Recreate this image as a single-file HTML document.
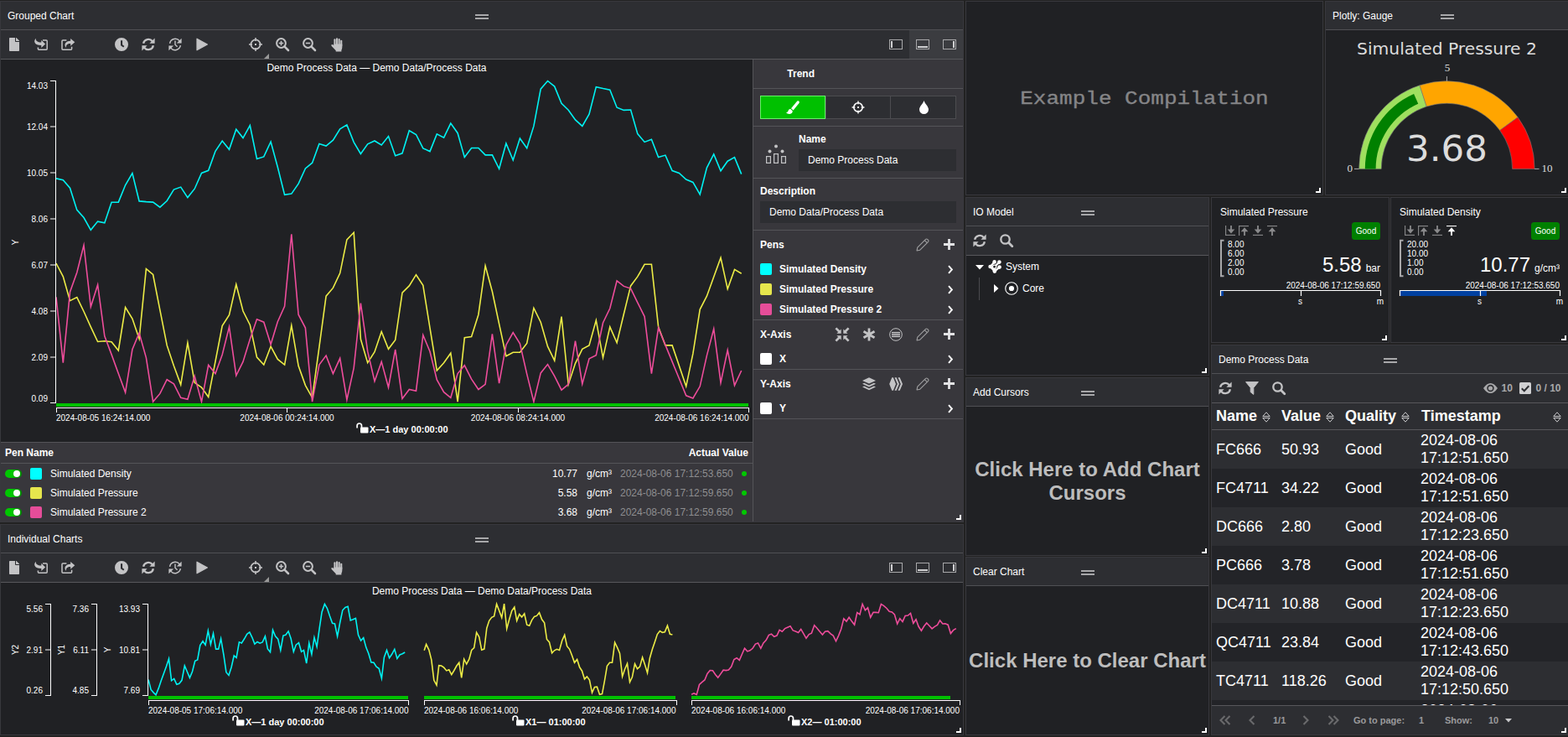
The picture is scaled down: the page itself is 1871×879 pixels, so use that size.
<!DOCTYPE html><html><head><meta charset="utf-8"><title>Dashboard</title><style>
*{box-sizing:border-box}
html,body{margin:0;padding:0}
body{width:1871px;height:879px;overflow:hidden;background:#222222;font-family:"Liberation Sans",sans-serif;font-size:12px;color:#fff;position:relative}
.p{position:absolute;border:1px solid #38383d;background:#202124;overflow:hidden}
.a{position:absolute}
.hd{position:absolute;left:0;top:0;right:0;height:34px;background:#2d2e32;border-bottom:1px solid #505054}
.hd .t{position:absolute;left:8px;top:1px;line-height:33px;font-size:12px;color:#fff;white-space:nowrap}
.hd .g{position:absolute;top:15px;width:16px;height:6px;border-top:2px solid #a8a8aa;border-bottom:2px solid #a8a8aa}
.tb{position:absolute;left:0;right:0;height:35px;background:#2d2e32;border-bottom:1px solid #57575b}
.rz{position:absolute;right:2px;bottom:2px;width:6px;height:6px;border-right:2px solid #fff;border-bottom:2px solid #fff}
.t{white-space:nowrap}
.b{font-weight:bold}
svg{position:absolute;overflow:visible}
.sp{position:absolute;background:#38373c}
.ln{position:absolute;height:1px;background:#545458}
.big{position:absolute;left:0;right:0;text-align:center;font-weight:bold;font-size:24px;line-height:27.5px;color:#bdbdbd}
</style></head><body><div class="p" style="left:0px;top:1px;width:1150px;height:622px">
<div class="hd"><div class="t">Grouped Chart</div><div class="g" style="left:566px"></div></div>
<div class="tb" style="top:34px">
<div class="a" style="left:1084px;top:0;width:65px;height:34px;background:#3b3c40"></div>
<svg style="left:10.00px;top:9.00px" width="12" height="16" viewBox="0 0 384 512"><path fill="#c3c3c5" d="M224 136V0H24C10.7 0 0 10.7 0 24v464c0 13.3 10.7 24 24 24h336c13.300 0 24-10.700 24-24V160H248c-13.200 0-24-10.800-24-24zm160-14.100v6.100H256V0h6.100c6.400 0 12.500 2.500 17 7l97.900 98c4.500 4.500 7 10.600 7 16.900z"/></svg>
<svg style="left:40.00px;top:9.40px" width="16" height="16" viewBox="0 0 16 16"><path d="M10 3.100H14.200Q15.200 3.100 15.200 4.100V13.200Q15.200 14.200 14.200 14.200H5.400Q4.400 14.200 4.400 13.200V11.500" fill="none" stroke="#c3c3c5" stroke-width="1.500"/><path d="M1.700 0.800C-1.800 4.800 0.800 9.200 8.300 9V12.100L13.100 7.400L8.300 2.700V5.500C4.300 5.600 1.600 4.300 1.700 0.800Z" fill="#c3c3c5"/></svg>
<svg style="left:72.00px;top:9.40px" width="17" height="16" viewBox="0 0 17 16"><path d="M6.400 3.100H2Q1 3.100 1 4.100V13.200Q1 14.200 2 14.200H11.600Q12.600 14.200 12.600 13.200V10.800" fill="none" stroke="#c3c3c5" stroke-width="1.500"/><path d="M11.200 0.900L16.300 5.300L11.200 9.700V6.900C7.600 6.800 5.600 8.200 5.900 11.900C2.800 8.100 5 3.800 11.200 3.700Z" fill="#c3c3c5"/></svg>
<svg style="left:136.00px;top:9.00px" width="16" height="16" viewBox="0 0 16 16"><path fill-rule="evenodd" fill="#c3c3c5" d="M8 0A8 8 0 1 0 8 16A8 8 0 1 0 8 0ZM7 3.200H9.100V8.200L11.400 9.900L10.200 11.600L7 9.200Z"/></svg>
<svg style="left:168.00px;top:9.00px" width="16" height="16" viewBox="0 0 16 16"><g fill="none" stroke="#c3c3c5" stroke-width="2.300"><path d="M2.100 6.800A6.100 6.100 0 0 1 12.900 4.200"/><path d="M13.900 9.200A6.100 6.100 0 0 1 3.100 11.800"/></g><path fill="#c3c3c5" d="M15.600 0.600V6.800H9.400Z"/><path fill="#c3c3c5" d="M0.400 15.400V9.200H6.600Z"/></svg>
<svg style="left:200.00px;top:9.00px" width="16" height="16" viewBox="0 0 16 16"><g fill="none" stroke="#c3c3c5" stroke-width="1.500"><path d="M1.600 6.800A6.600 6.600 0 0 1 13.300 3.900"/><path d="M14.400 9.200A6.600 6.600 0 0 1 2.700 12.100"/><path d="M8 3.600V8.200L10.600 10.800" stroke-width="1.400"/></g><path fill="#c3c3c5" d="M15.600 0.800V6.600H9.800Z"/><path fill="#c3c3c5" d="M0.400 15.200V9.400H6.200Z"/></svg>
<svg style="left:232.50px;top:9.00px" width="14" height="16" viewBox="0 0 14 16"><path fill="#c3c3c5" stroke="#c3c3c5" stroke-width="1.200" stroke-linejoin="round" d="M1 1.200L13.400 8L1 14.800Z"/></svg>
<svg style="left:296.00px;top:9.00px" width="16" height="16" viewBox="0 0 16 16"><g fill="none" stroke="#c3c3c5"><circle cx="8" cy="8" r="5.6" stroke-width="1.70"/><path d="M8 0.00V4.00M8 12.00V16.00M0.00 8H4.00M12.00 8H16.00" stroke-width="1.50"/></g><rect x="7.00" y="7.00" width="2.00" height="2.00" fill="#c3c3c5"/></svg>
<svg style="left:328.00px;top:9.00px" width="16" height="16" viewBox="0 0 16 16"><g fill="none" stroke="#c3c3c5"><circle cx="6.500" cy="6.500" r="5.400" stroke-width="2"/><path d="M10.600 10.600L15 15" stroke-width="2.600" stroke-linecap="round"/><path d="M3.800 6.500H9.200 M6.500 3.800V9.200" stroke-width="1.600"/></g></svg>
<svg style="left:360.00px;top:9.00px" width="16" height="16" viewBox="0 0 16 16"><g fill="none" stroke="#c3c3c5"><circle cx="6.500" cy="6.500" r="5.400" stroke-width="2"/><path d="M10.600 10.600L15 15" stroke-width="2.600" stroke-linecap="round"/><path d="M3.800 6.500H9.200" stroke-width="1.600"/></g></svg>
<svg style="left:393.70px;top:8.70px" width="14" height="17" viewBox="0 0 14 17"><g fill="#c3c3c5"><rect x="3.400" y="1.300" width="2.100" height="9" rx="1.050"/><rect x="6" y="0.200" width="2.100" height="10" rx="1.050"/><rect x="8.600" y="0.900" width="2.100" height="9.500" rx="1.050"/><rect x="11.200" y="2.700" width="2.100" height="8" rx="1.050"/><path d="M3.400 7.500H13.300V11.500Q13.300 13.500 12.400 14.800V16.400H5.700V15.200L0.700 10Q-0.100 8.900 0.700 8.200Q1.600 7.600 2.500 8.400L3.400 9.400Z"/></g></svg>
<svg style="left:314px;top:28px" width="6" height="6"><path d="M6 0V6H0Z" fill="#999"/></svg>
<div class="a" style="left:1060px;top:11px;width:16px;height:12px;border:1px solid #a8a8aa"></div>
<div class="a" style="left:1062px;top:13px;width:2px;height:8px;background:#d0d0d2"></div>
<div class="a" style="left:1092px;top:11px;width:16px;height:12px;border:1px solid #a8a8aa"></div>
<div class="a" style="left:1094px;top:19px;width:12px;height:2px;background:#d0d0d2"></div>
<div class="a" style="left:1124px;top:11px;width:16px;height:12px;border:1px solid #a8a8aa"></div>
<div class="a" style="left:1136px;top:13px;width:2px;height:8px;background:#d0d0d2"></div>
</div>
<svg style="left:-1px;top:-2px" width="1150" height="623" viewBox="0 0 1150 623" font-family="Liberation Sans,sans-serif">
<g fill="none" stroke-width="1.6" stroke-linejoin="miter" stroke-miterlimit="6">
<polyline stroke="#00f2f2" points="67.0,212.9 75.3,214.7 83.5,224.2 91.8,250.4 100.0,259.5 108.3,274.3 116.6,264.1 124.8,265.9 133.1,241.3 141.3,241.1 149.6,220.8 157.9,206.5 166.1,239.9 174.4,240.6 182.6,241.1 190.9,247.2 199.2,239.5 207.4,226.1 215.7,223.1 223.9,235.6 232.2,225.2 240.5,206.5 248.7,203.3 257.0,180.3 265.2,168.0 273.5,178.3 281.8,154.2 290.0,164.6 298.3,149.6 306.5,189.4 314.8,186.9 323.1,169.0 331.3,199.2 339.6,232.4 347.8,231.1 356.1,219.2 364.4,201.0 372.6,194.2 380.9,171.5 389.1,174.0 397.4,167.1 405.7,153.9 413.9,148.9 422.2,169.6 430.4,183.5 438.7,171.9 447.0,168.0 455.2,173.0 463.5,162.6 471.7,185.8 480.0,182.8 488.3,155.8 496.5,160.5 504.8,176.9 513.0,180.6 521.3,159.9 529.6,164.2 537.8,147.1 546.1,158.7 554.3,187.6 562.6,176.5 570.9,176.5 579.1,184.9 587.4,184.9 595.6,201.3 603.9,171.0 612.2,191.0 620.4,165.1 628.7,176.7 636.9,150.4 645.2,106.2 653.5,96.5 661.7,103.1 670.0,123.3 678.2,131.2 686.5,142.9 694.8,150.4 703.0,136.1 711.3,103.6 719.5,105.5 727.8,107.1 736.1,128.2 744.3,131.4 752.6,131.0 760.8,159.6 769.1,169.4 777.4,166.2 785.6,187.6 793.9,185.1 802.1,203.5 810.4,206.5 818.7,214.0 826.9,217.4 835.2,232.0 843.4,200.1 851.7,184.0 860.0,203.8 868.2,192.2 876.5,187.6 884.7,207.6"/>
<polyline stroke="#ecec46" points="67.0,314.0 75.3,329.9 83.5,358.6 91.8,354.6 100.0,371.5 108.3,389.9 116.6,407.5 124.8,406.7 133.1,407.7 141.3,418.0 149.6,366.6 157.9,380.1 166.1,404.1 174.4,320.6 182.6,327.5 190.9,369.8 199.2,411.9 207.4,436.3 215.7,458.8 223.9,408.9 232.2,456.4 240.5,462.0 248.7,473.5 257.0,431.0 265.2,388.6 273.5,375.7 281.8,339.2 290.0,371.0 298.3,387.4 306.5,426.1 314.8,435.1 323.1,413.1 331.3,428.5 339.6,435.1 347.8,388.2 356.1,436.3 364.4,459.6 372.6,474.3 380.9,413.8 389.1,353.2 397.4,343.4 405.7,325.8 413.9,285.9 422.2,277.3 430.4,404.5 438.7,432.7 447.0,419.7 455.2,395.5 463.5,416.3 471.7,405.4 480.0,349.2 488.3,340.9 496.5,327.7 504.8,340.4 513.0,391.1 521.3,442.0 529.6,432.7 537.8,421.2 546.1,479.1 554.3,402.8 562.6,401.6 570.9,375.2 579.1,317.0 587.4,347.8 595.6,386.4 603.9,424.8 612.2,420.2 620.4,420.2 628.7,409.4 636.9,367.4 645.2,384.2 653.5,413.1 661.7,430.2 670.0,377.6 678.2,458.4 686.5,433.3 694.8,416.3 703.0,411.9 711.3,382.0 719.5,426.6 727.8,389.9 736.1,408.7 744.3,374.7 752.6,340.9 760.8,329.9 769.1,315.3 777.4,315.3 785.6,389.9 793.9,411.9 802.1,411.9 810.4,436.3 818.7,460.8 826.9,421.7 835.2,369.1 843.4,353.2 851.7,330.2 860.0,307.4 868.2,344.6 876.5,321.4 884.7,326.3"/>
<polyline stroke="#ee4d9b" points="67.0,354.4 75.3,432.7 83.5,348.3 91.8,325.0 100.0,292.5 108.3,365.9 116.6,339.7 124.8,400.9 133.1,422.9 141.3,445.4 149.6,468.1 157.9,416.8 166.1,397.2 174.4,426.6 182.6,479.1 190.9,469.4 199.2,452.7 207.4,457.9 215.7,474.3 223.9,476.2 232.2,448.6 240.5,479.1 248.7,435.4 257.0,445.6 265.2,422.9 273.5,389.9 281.8,447.8 290.0,431.4 298.3,404.5 306.5,380.8 314.8,384.2 323.1,410.7 331.3,383.7 339.6,365.4 347.8,279.3 356.1,375.2 364.4,391.1 372.6,479.1 380.9,435.1 389.1,424.1 397.4,445.6 405.7,427.3 413.9,476.7 422.2,438.8 430.4,361.7 438.7,419.2 447.0,454.7 455.2,431.4 463.5,462.0 471.7,416.8 480.0,475.5 488.3,464.5 496.5,466.2 504.8,399.6 513.0,419.2 521.3,453.0 529.6,467.6 537.8,474.3 546.1,445.6 554.3,435.8 562.6,452.2 570.9,464.5 579.1,458.4 587.4,398.4 595.6,457.1 603.9,411.4 612.2,396.5 620.4,409.9 628.7,446.1 636.9,479.1 645.2,444.9 653.5,434.6 661.7,448.6 670.0,465.2 678.2,458.4 686.5,406.7 694.8,457.9 703.0,427.8 711.3,423.6 719.5,385.0 727.8,367.8 736.1,334.8 744.3,341.4 752.6,344.1 760.8,360.8 769.1,377.6 777.4,445.6 785.6,391.1 793.9,411.4 802.1,431.4 810.4,451.5 818.7,471.8 826.9,475.0 835.2,460.8 843.4,424.1 851.7,392.3 860.0,456.4 868.2,417.5 876.5,459.6 884.7,442.0"/>
</g>
<g stroke="#fff" stroke-width="1" fill="none" shape-rendering="crispEdges">
<path d="M60 96.5H66.5V480.5H60"/>
<path d="M60 151H66" stroke="#8e8e90" stroke-width="2"/>
<path d="M60 206H66" stroke="#8e8e90" stroke-width="2"/>
<path d="M60 261H66" stroke="#8e8e90" stroke-width="2"/>
<path d="M60 316H66" stroke="#8e8e90" stroke-width="2"/>
<path d="M60 371H66" stroke="#8e8e90" stroke-width="2"/>
<path d="M60 426H66" stroke="#8e8e90" stroke-width="2"/>
<path d="M67.5 492V486.5H893.5V492"/>
<path d="M342.5 486V492M618.5 486V492"/>
</g>
<rect x="67" y="481" width="826" height="4" fill="#00c000"/>
<g fill="#fff" font-size="10" text-anchor="end">
<text x="57" y="105.5">14.03</text>
<text x="57" y="154.5">12.04</text>
<text x="57" y="209.5">10.05</text>
<text x="57" y="264.5">8.06</text>
<text x="57" y="319.5">6.07</text>
<text x="57" y="374.5">4.08</text>
<text x="57" y="429.5">2.09</text>
<text x="57" y="478.5">0.09</text>
</g>
<text x="0" y="0" transform="translate(21.5,289) rotate(-90)" fill="#fff" font-size="10" text-anchor="middle">Y</text>
<g fill="#fff" font-size="10">
<text x="67" y="502">2024-08-05 16:24:14.000</text>
<text x="342.5" y="502" text-anchor="middle">2024-08-06 00:24:14.000</text>
<text x="618" y="502" text-anchor="middle">2024-08-06 08:24:14.000</text>
<text x="893.5" y="502" text-anchor="end">2024-08-06 16:24:14.000</text>
</g>
<text x="441" y="516" fill="#fff" font-size="11" font-weight="bold">X—1 day 00:00:00</text>
<g transform="translate(425,504)"><rect x="5" y="5.600" width="9.500" height="6.900" rx="1" fill="#fff"/><path d="M1.100 6.600V3.700A2.700 2.700 0 0 1 6.500 3.700V6" fill="none" stroke="#fff" stroke-width="1.700"/></g>
<text x="449.5" y="84.5" fill="#fff" font-size="12" text-anchor="middle">Demo Process Data — Demo Data/Process Data</text>
</svg>
<div class="sp" style="left:0;top:525px;width:897px;height:96px"></div>
<div class="ln" style="left:0;top:525px;width:897px"></div>
<div class="ln" style="left:0;top:550px;width:897px"></div>
<div class="a t" style="top:529.5px;line-height:16px;font-size:12px;color:#fff;font-weight:bold;left:5px;">Pen Name</div>
<div class="a t" style="top:529.5px;line-height:16px;font-size:12px;color:#fff;font-weight:bold;right:calc(100% - 892px);">Actual Value</div>
<div class="a" style="left:5px;top:558px;width:20px;height:10px;border-radius:5px;background:linear-gradient(90deg,#00c800 40%,#008a00)"></div>
<div class="a" style="left:15px;top:559px;width:8px;height:8px;border-radius:4px;background:#fff"></div>
<div class="a" style="left:35px;top:556px;width:14px;height:14px;border-radius:2px;background:#00ffff"></div>
<div class="a t" style="top:555.0px;line-height:16px;font-size:12px;color:#fff;left:59px;">Simulated Density</div>
<div class="a t" style="top:555.0px;line-height:16px;font-size:12px;color:#fff;right:calc(100% - 688px);">10.77</div>
<div class="a t" style="top:555.0px;line-height:16px;font-size:12px;color:#fff;left:699px;">g/cm³</div>
<div class="a t" style="top:555.0px;line-height:16px;font-size:12px;color:#8e8e90;left:739px;">2024-08-06 17:12:53.650</div>
<div class="a" style="left:884px;top:560px;width:6px;height:6px;border-radius:3px;background:#00c800"></div>
<div class="a" style="left:5px;top:581px;width:20px;height:10px;border-radius:5px;background:linear-gradient(90deg,#00c800 40%,#008a00)"></div>
<div class="a" style="left:15px;top:582px;width:8px;height:8px;border-radius:4px;background:#fff"></div>
<div class="a" style="left:35px;top:579px;width:14px;height:14px;border-radius:2px;background:#e6e64d"></div>
<div class="a t" style="top:578.0px;line-height:16px;font-size:12px;color:#fff;left:59px;">Simulated Pressure</div>
<div class="a t" style="top:578.0px;line-height:16px;font-size:12px;color:#fff;right:calc(100% - 688px);">5.58</div>
<div class="a t" style="top:578.0px;line-height:16px;font-size:12px;color:#fff;left:699px;">g/cm³</div>
<div class="a t" style="top:578.0px;line-height:16px;font-size:12px;color:#8e8e90;left:739px;">2024-08-06 17:12:59.650</div>
<div class="a" style="left:884px;top:583px;width:6px;height:6px;border-radius:3px;background:#00c800"></div>
<div class="a" style="left:5px;top:604px;width:20px;height:10px;border-radius:5px;background:linear-gradient(90deg,#00c800 40%,#008a00)"></div>
<div class="a" style="left:15px;top:605px;width:8px;height:8px;border-radius:4px;background:#fff"></div>
<div class="a" style="left:35px;top:602px;width:14px;height:14px;border-radius:2px;background:#e64d99"></div>
<div class="a t" style="top:601.0px;line-height:16px;font-size:12px;color:#fff;left:59px;">Simulated Pressure 2</div>
<div class="a t" style="top:601.0px;line-height:16px;font-size:12px;color:#fff;right:calc(100% - 688px);">3.68</div>
<div class="a t" style="top:601.0px;line-height:16px;font-size:12px;color:#fff;left:699px;">g/cm³</div>
<div class="a t" style="top:601.0px;line-height:16px;font-size:12px;color:#8e8e90;left:739px;">2024-08-06 17:12:59.650</div>
<div class="a" style="left:884px;top:606px;width:6px;height:6px;border-radius:3px;background:#00c800"></div>
<div class="sp" style="left:897px;top:69px;width:252px;height:552px;border-left:1px solid #545458"></div>
<div class="ln" style="left:898px;top:103px;width:251px"></div>
<div class="ln" style="left:898px;top:148px;width:251px"></div>
<div class="ln" style="left:898px;top:210px;width:251px"></div>
<div class="ln" style="left:898px;top:272px;width:251px"></div>
<div class="ln" style="left:898px;top:379px;width:251px"></div>
<div class="ln" style="left:898px;top:438px;width:251px"></div>
<div class="ln" style="left:898px;top:497px;width:251px"></div>
<div class="a t" style="top:78.0px;line-height:16px;font-size:12px;color:#fff;font-weight:bold;left:938.3px;">Trend</div>
<div class="a" style="left:906px;top:112px;width:78px;height:28px;background:#00c000;border:1px solid #66f266"></div>
<div class="a" style="left:984px;top:112px;width:78px;height:28px;background:#2d2e32;border:1px solid #4c4c50"></div>
<div class="a" style="left:1062px;top:112px;width:78px;height:28px;background:#2d2e32;border:1px solid #4c4c50;border-left:none"></div>
<svg style="left:937.00px;top:118.00px" width="16" height="16" viewBox="0 0 16 16"><path fill="#fff" d="M13.300 0.500Q14.800 -0.300 15.600 0.900Q16.200 2 15.300 3.200L8.600 11.400L6 9.200Z"/><path fill="#fff" d="M5.200 10.100L7.700 12.300Q8 15.600 4.300 16Q1.500 16.200 0 14.200Q2.400 13.900 2.600 12Q3 10 5.200 10.100Z"/></svg>
<svg style="left:1015.00px;top:118.00px" width="16" height="16" viewBox="0 0 16 16"><g fill="none" stroke="#fff"><circle cx="8" cy="8" r="5.2" stroke-width="1.58"/><path d="M8 0.57V4.29M8 11.71V15.43M0.57 8H4.29M11.71 8H15.43" stroke-width="1.39"/></g><rect x="7.07" y="7.07" width="1.86" height="1.86" fill="#fff"/></svg>
<svg style="left:1095.50px;top:118.00px" width="11" height="16" viewBox="0 0 11 16"><path fill="#fff" d="M5.500 0C6.500 3.600 11 7 11 10.600A5.500 5.500 0 0 1 0 10.600C0 7 4.500 3.600 5.500 0Z"/></svg>
<svg style="left:913.00px;top:168.80px" width="24" height="24" viewBox="0 0 24 24"><g fill="none" stroke="#c3c3c5" stroke-width="1.200"><rect x="0.600" y="15.600" width="4.800" height="7.800"/><rect x="9.600" y="12.600" width="4.800" height="10.800"/><rect x="18.600" y="15.600" width="4.800" height="7.800"/></g><g fill="#c3c3c5"><circle cx="4.500" cy="9.600" r="2"/><circle cx="12" cy="3.600" r="2"/><circle cx="19.500" cy="9.600" r="2"/></g></svg>
<div class="a t" style="top:155.5px;line-height:16px;font-size:12px;color:#fff;font-weight:bold;left:952px;">Name</div>
<div class="a" style="left:952px;top:176px;width:188px;height:26px;background:#2d2e32"></div>
<div class="a t" style="top:181.0px;line-height:16px;font-size:12px;color:#fff;left:963px;">Demo Process Data</div>
<div class="a t" style="top:217.5px;line-height:16px;font-size:12px;color:#fff;font-weight:bold;left:906px;">Description</div>
<div class="a" style="left:906px;top:238px;width:234px;height:26px;background:#2d2e32"></div>
<div class="a t" style="top:243.0px;line-height:16px;font-size:12px;color:#fff;left:917px;">Demo Data/Process Data</div>
<div class="a t" style="top:281.5px;line-height:16px;font-size:12px;color:#fff;font-weight:bold;left:906px;">Pens</div>
<svg style="left:1092.00px;top:282.00px" width="16" height="16" viewBox="0 0 16 16"><g fill="none" stroke="#a0a0a2" stroke-width="1.100" stroke-linejoin="round"><path d="M1 15L1.800 11.200L11.600 1.400Q12.600 0.500 13.600 1.400L14.600 2.400Q15.500 3.400 14.600 4.400L4.800 14.200Z"/><path d="M10.300 2.700L13.300 5.700"/></g></svg>
<svg style="left:1125.00px;top:283.00px" width="13" height="13" viewBox="0 0 13 13"><path d="M6.500 0V13M0 6.500H13" stroke="#e4e4e6" stroke-width="2.800" fill="none"/></svg>
<div class="a" style="left:906px;top:312px;width:14px;height:14px;border-radius:2px;background:#00ffff"></div>
<div class="a t" style="top:311.0px;line-height:16px;font-size:12px;color:#fff;font-weight:bold;left:929px;">Simulated Density</div>
<svg style="left:1129.50px;top:314.00px" width="7" height="11" viewBox="0 0 7 11"><path d="M1 1.200L4.900 5.500L1 9.800" stroke="#fff" stroke-width="1.900" fill="none"/></svg>
<div class="a" style="left:906px;top:336px;width:14px;height:14px;border-radius:2px;background:#e6e64d"></div>
<div class="a t" style="top:335.0px;line-height:16px;font-size:12px;color:#fff;font-weight:bold;left:929px;">Simulated Pressure</div>
<svg style="left:1129.50px;top:338.00px" width="7" height="11" viewBox="0 0 7 11"><path d="M1 1.200L4.900 5.500L1 9.800" stroke="#fff" stroke-width="1.900" fill="none"/></svg>
<div class="a" style="left:906px;top:360px;width:14px;height:14px;border-radius:2px;background:#e64d99"></div>
<div class="a t" style="top:359.0px;line-height:16px;font-size:12px;color:#fff;font-weight:bold;left:929px;">Simulated Pressure 2</div>
<svg style="left:1129.50px;top:362.00px" width="7" height="11" viewBox="0 0 7 11"><path d="M1 1.200L4.900 5.500L1 9.800" stroke="#fff" stroke-width="1.900" fill="none"/></svg>
<div class="a t" style="top:388.5px;line-height:16px;font-size:12px;color:#fff;font-weight:bold;left:906px;">X-Axis</div>
<svg style="left:996.00px;top:389.00px" width="16" height="16" viewBox="0 0 16 16"><g transform="translate(8,8) scale(1,1)"><path d="M7.600 -7.600L3.200 -3.200" stroke="#c3c3c5" stroke-width="2.700" fill="none"/><path d="M1.300 -6.600V-1.300H6.600Z" fill="#c3c3c5"/></g><g transform="translate(8,8) scale(-1,1)"><path d="M7.600 -7.600L3.200 -3.200" stroke="#c3c3c5" stroke-width="2.700" fill="none"/><path d="M1.300 -6.600V-1.300H6.600Z" fill="#c3c3c5"/></g><g transform="translate(8,8) scale(1,-1)"><path d="M7.600 -7.600L3.200 -3.200" stroke="#c3c3c5" stroke-width="2.700" fill="none"/><path d="M1.300 -6.600V-1.300H6.600Z" fill="#c3c3c5"/></g><g transform="translate(8,8) scale(-1,-1)"><path d="M7.600 -7.600L3.200 -3.200" stroke="#c3c3c5" stroke-width="2.700" fill="none"/><path d="M1.300 -6.600V-1.300H6.600Z" fill="#c3c3c5"/></g></svg>
<svg style="left:1028.00px;top:389.00px" width="16" height="16" viewBox="0 0 16 16"><path d="M8 0.500V15.500M1.500 4.200L14.500 11.800M14.500 4.200L1.500 11.800" stroke="#c3c3c5" stroke-width="2.800" fill="none"/></svg>
<svg style="left:1060.00px;top:389.20px" width="16" height="16" viewBox="0 0 16 16"><circle cx="8" cy="8" r="7.300" fill="none" stroke="#c3c3c5" stroke-width="1"/><g fill="#c3c3c5"><rect x="3" y="4.900" width="10" height="1.500"/><rect x="3" y="7.250" width="10" height="1.500"/><rect x="3" y="9.600" width="10" height="1.500"/></g></svg>
<svg style="left:1092.00px;top:389.00px" width="16" height="16" viewBox="0 0 16 16"><g fill="none" stroke="#a0a0a2" stroke-width="1.100" stroke-linejoin="round"><path d="M1 15L1.800 11.200L11.600 1.400Q12.600 0.500 13.600 1.400L14.600 2.400Q15.500 3.400 14.600 4.400L4.800 14.200Z"/><path d="M10.300 2.700L13.300 5.700"/></g></svg>
<svg style="left:1125.00px;top:390.00px" width="13" height="13" viewBox="0 0 13 13"><path d="M6.500 0V13M0 6.500H13" stroke="#e4e4e6" stroke-width="2.800" fill="none"/></svg>
<div class="a" style="left:906px;top:419px;width:14px;height:14px;border-radius:2px;background:#fff"></div>
<div class="a t" style="top:418.0px;line-height:16px;font-size:12px;color:#fff;font-weight:bold;left:929px;">X</div>
<svg style="left:1129.50px;top:421.00px" width="7" height="11" viewBox="0 0 7 11"><path d="M1 1.200L4.900 5.500L1 9.800" stroke="#fff" stroke-width="1.900" fill="none"/></svg>
<div class="a t" style="top:447.5px;line-height:16px;font-size:12px;color:#fff;font-weight:bold;left:906px;">Y-Axis</div>
<svg style="left:1028.00px;top:448.30px" width="16" height="16" viewBox="0 0 16 16"><path fill="#c3c3c5" d="M8 0.200L16 3.900L8 7.600L0 3.900Z"/><path fill="#c3c3c5" d="M0 7.700L2.200 6.700L8 9.400L13.800 6.700L16 7.700L8 11.400Z"/><path fill="#c3c3c5" d="M0 11.500L2.200 10.500L8 13.200L13.800 10.500L16 11.500L8 15.200Z"/></svg>
<svg style="left:1060.00px;top:448.00px" width="16" height="16" viewBox="0 0 16 16"><path fill="#c3c3c5" d="M0.200 8L3.300 0.200H4.900L8 8L4.900 15.800H3.300Z"/><path fill="#c3c3c5" d="M6.500 0.200H8.700L12 8L8.700 15.800H6.500L9.800 8Z"/><path fill="#c3c3c5" d="M10.500 0.200H12.700L16 8L12.700 15.800H10.500L13.800 8Z"/></svg>
<svg style="left:1092.00px;top:448.00px" width="16" height="16" viewBox="0 0 16 16"><g fill="none" stroke="#a0a0a2" stroke-width="1.100" stroke-linejoin="round"><path d="M1 15L1.800 11.200L11.600 1.400Q12.600 0.500 13.600 1.400L14.600 2.400Q15.500 3.400 14.600 4.400L4.800 14.200Z"/><path d="M10.300 2.700L13.300 5.700"/></g></svg>
<svg style="left:1125.00px;top:449.00px" width="13" height="13" viewBox="0 0 13 13"><path d="M6.500 0V13M0 6.500H13" stroke="#e4e4e6" stroke-width="2.800" fill="none"/></svg>
<div class="a" style="left:906px;top:478px;width:14px;height:14px;border-radius:2px;background:#fff"></div>
<div class="a t" style="top:477.0px;line-height:16px;font-size:12px;color:#fff;font-weight:bold;left:929px;">Y</div>
<svg style="left:1129.50px;top:480.00px" width="7" height="11" viewBox="0 0 7 11"><path d="M1 1.200L4.900 5.500L1 9.800" stroke="#fff" stroke-width="1.900" fill="none"/></svg>
<div class="rz"></div></div>
<div class="p" style="left:0px;top:625px;width:1150px;height:252px">
<div class="hd"><div class="t">Individual Charts</div><div class="g" style="left:566px"></div></div>
<div class="tb" style="top:34px">
<svg style="left:10.00px;top:9.00px" width="12" height="16" viewBox="0 0 384 512"><path fill="#c3c3c5" d="M224 136V0H24C10.7 0 0 10.7 0 24v464c0 13.3 10.7 24 24 24h336c13.300 0 24-10.700 24-24V160H248c-13.200 0-24-10.800-24-24zm160-14.100v6.100H256V0h6.100c6.400 0 12.500 2.500 17 7l97.900 98c4.500 4.500 7 10.600 7 16.900z"/></svg>
<svg style="left:40.00px;top:9.40px" width="16" height="16" viewBox="0 0 16 16"><path d="M10 3.100H14.200Q15.200 3.100 15.200 4.100V13.200Q15.200 14.200 14.200 14.200H5.400Q4.400 14.200 4.400 13.200V11.500" fill="none" stroke="#c3c3c5" stroke-width="1.500"/><path d="M1.700 0.800C-1.800 4.800 0.800 9.200 8.300 9V12.100L13.100 7.400L8.300 2.700V5.500C4.300 5.600 1.600 4.300 1.700 0.800Z" fill="#c3c3c5"/></svg>
<svg style="left:72.00px;top:9.40px" width="17" height="16" viewBox="0 0 17 16"><path d="M6.400 3.100H2Q1 3.100 1 4.100V13.200Q1 14.200 2 14.200H11.600Q12.600 14.200 12.600 13.200V10.800" fill="none" stroke="#c3c3c5" stroke-width="1.500"/><path d="M11.200 0.900L16.300 5.300L11.200 9.700V6.900C7.600 6.800 5.600 8.200 5.900 11.900C2.800 8.100 5 3.800 11.200 3.700Z" fill="#c3c3c5"/></svg>
<svg style="left:136.00px;top:9.00px" width="16" height="16" viewBox="0 0 16 16"><path fill-rule="evenodd" fill="#c3c3c5" d="M8 0A8 8 0 1 0 8 16A8 8 0 1 0 8 0ZM7 3.200H9.100V8.200L11.400 9.900L10.200 11.600L7 9.200Z"/></svg>
<svg style="left:168.00px;top:9.00px" width="16" height="16" viewBox="0 0 16 16"><g fill="none" stroke="#c3c3c5" stroke-width="2.300"><path d="M2.100 6.800A6.100 6.100 0 0 1 12.900 4.200"/><path d="M13.900 9.200A6.100 6.100 0 0 1 3.100 11.800"/></g><path fill="#c3c3c5" d="M15.600 0.600V6.800H9.400Z"/><path fill="#c3c3c5" d="M0.400 15.400V9.200H6.600Z"/></svg>
<svg style="left:200.00px;top:9.00px" width="16" height="16" viewBox="0 0 16 16"><g fill="none" stroke="#c3c3c5" stroke-width="1.500"><path d="M1.600 6.800A6.600 6.600 0 0 1 13.300 3.900"/><path d="M14.400 9.200A6.600 6.600 0 0 1 2.700 12.100"/><path d="M8 3.600V8.200L10.600 10.800" stroke-width="1.400"/></g><path fill="#c3c3c5" d="M15.600 0.800V6.600H9.800Z"/><path fill="#c3c3c5" d="M0.400 15.200V9.400H6.200Z"/></svg>
<svg style="left:232.50px;top:9.00px" width="14" height="16" viewBox="0 0 14 16"><path fill="#c3c3c5" stroke="#c3c3c5" stroke-width="1.200" stroke-linejoin="round" d="M1 1.200L13.400 8L1 14.800Z"/></svg>
<svg style="left:296.00px;top:9.00px" width="16" height="16" viewBox="0 0 16 16"><g fill="none" stroke="#c3c3c5"><circle cx="8" cy="8" r="5.6" stroke-width="1.70"/><path d="M8 0.00V4.00M8 12.00V16.00M0.00 8H4.00M12.00 8H16.00" stroke-width="1.50"/></g><rect x="7.00" y="7.00" width="2.00" height="2.00" fill="#c3c3c5"/></svg>
<svg style="left:328.00px;top:9.00px" width="16" height="16" viewBox="0 0 16 16"><g fill="none" stroke="#c3c3c5"><circle cx="6.500" cy="6.500" r="5.400" stroke-width="2"/><path d="M10.600 10.600L15 15" stroke-width="2.600" stroke-linecap="round"/><path d="M3.800 6.500H9.200 M6.500 3.800V9.200" stroke-width="1.600"/></g></svg>
<svg style="left:360.00px;top:9.00px" width="16" height="16" viewBox="0 0 16 16"><g fill="none" stroke="#c3c3c5"><circle cx="6.500" cy="6.500" r="5.400" stroke-width="2"/><path d="M10.600 10.600L15 15" stroke-width="2.600" stroke-linecap="round"/><path d="M3.800 6.500H9.200" stroke-width="1.600"/></g></svg>
<svg style="left:393.70px;top:8.70px" width="14" height="17" viewBox="0 0 14 17"><g fill="#c3c3c5"><rect x="3.400" y="1.300" width="2.100" height="9" rx="1.050"/><rect x="6" y="0.200" width="2.100" height="10" rx="1.050"/><rect x="8.600" y="0.900" width="2.100" height="9.500" rx="1.050"/><rect x="11.200" y="2.700" width="2.100" height="8" rx="1.050"/><path d="M3.400 7.500H13.300V11.500Q13.300 13.500 12.400 14.800V16.400H5.700V15.200L0.700 10Q-0.100 8.900 0.700 8.200Q1.600 7.600 2.500 8.400L3.400 9.400Z"/></g></svg>
<svg style="left:314px;top:28px" width="6" height="6"><path d="M6 0V6H0Z" fill="#999"/></svg>
<div class="a" style="left:1060px;top:11px;width:16px;height:12px;border:1px solid #a8a8aa"></div>
<div class="a" style="left:1062px;top:13px;width:2px;height:8px;background:#d0d0d2"></div>
<div class="a" style="left:1092px;top:11px;width:16px;height:12px;border:1px solid #a8a8aa"></div>
<div class="a" style="left:1094px;top:19px;width:12px;height:2px;background:#d0d0d2"></div>
<div class="a" style="left:1124px;top:11px;width:16px;height:12px;border:1px solid #a8a8aa"></div>
<div class="a" style="left:1136px;top:13px;width:2px;height:8px;background:#d0d0d2"></div>
</div>
<svg style="left:-1px;top:-626px" width="1150" height="879" viewBox="0 0 1150 879" font-family="Liberation Sans,sans-serif">
<g fill="none" stroke-width="1.6" stroke-linejoin="miter" stroke-miterlimit="6">
<polyline stroke="#00f2f2" points="177.1,810.6 180.1,822.4 183.3,826.1 186.0,828.8 189.2,820.9 192.2,812.1 195.3,803.5 198.4,795.1 201.5,785.7 204.6,811.8 207.7,809.4 210.8,816.2 213.9,815.3 217.0,811.3 220.3,794.0 223.3,801.0 226.4,808.4 229.5,801.0 232.7,788.4 235.7,786.9 238.8,769.6 242.0,764.7 245.1,769.2 248.3,752.2 251.4,768.4 254.5,755.6 257.6,774.1 260.7,774.1 263.6,761.8 266.9,781.0 269.9,801.7 273.0,805.4 276.1,795.8 279.2,782.0 282.1,784.4 285.4,765.8 288.3,767.0 291.6,761.8 294.7,756.3 297.8,753.9 300.9,760.3 303.9,768.1 307.0,765.5 310.1,767.2 313.2,765.9 316.4,758.8 319.4,773.9 322.5,777.8 325.5,751.4 328.6,758.8 331.7,762.1 334.8,775.5 337.9,758.1 340.9,757.3 344.1,752.9 347.2,761.8 350.3,777.3 353.2,769.2 356.5,766.7 359.6,777.3 362.5,775.5 365.7,791.1 368.8,767.0 371.9,780.3 375.0,760.3 378.1,771.4 381.2,749.2 384.1,730.0 387.4,720.4 390.4,725.5 393.6,735.1 396.6,743.3 399.5,744.0 402.6,758.8 405.7,742.5 408.8,727.8 412.0,724.5 415.1,723.3 418.2,740.0 421.3,738.8 424.4,737.4 427.5,757.3 430.6,764.0 433.7,760.7 436.8,772.1 439.8,779.5 442.9,789.9 446.0,790.3 449.1,795.1 452.2,797.3 455.4,809.1 458.4,784.0 461.5,775.4 464.6,784.7 467.6,780.3 470.8,774.3 473.9,785.4 477.0,781.0 480.1,779.8 483.2,778.0"/>
<polyline stroke="#ecec46" points="506.2,775.8 508.6,768.4 511.8,775.1 514.8,786.9 517.8,811.3 521.0,817.2 523.7,793.6 526.6,794.0 529.7,796.2 532.8,799.9 535.8,798.8 538.8,804.7 541.9,799.5 544.8,794.3 547.8,790.3 550.7,808.4 553.7,786.2 556.7,792.1 559.8,786.2 562.7,775.5 565.7,772.6 568.6,754.4 571.7,759.6 574.7,775.1 577.8,774.1 580.8,749.2 583.7,740.3 586.7,736.3 589.6,734.9 592.6,720.4 595.7,728.5 598.7,736.6 601.6,720.1 604.7,749.9 607.7,738.8 610.7,728.5 613.8,724.1 616.7,740.3 619.7,732.6 622.6,735.9 625.7,731.9 628.7,745.2 631.7,746.2 634.6,739.6 637.6,735.4 640.5,734.4 643.5,730.7 646.6,738.8 649.6,742.8 652.5,762.5 655.5,765.9 658.6,778.8 661.5,775.8 664.5,774.3 667.5,775.4 670.7,764.0 673.7,757.3 676.6,770.7 679.6,774.3 682.5,781.7 685.5,790.3 688.6,786.5 691.6,795.8 694.5,800.2 697.5,809.9 700.4,806.9 703.4,811.0 706.5,826.1 709.5,819.5 712.4,819.2 715.5,828.3 718.5,827.6 721.4,812.1 724.4,794.3 727.5,790.3 730.5,790.3 733.6,766.2 736.5,772.1 739.5,779.1 742.6,806.9 745.6,798.0 748.5,791.4 751.5,813.6 754.4,807.6 757.5,791.8 760.5,797.7 763.5,795.1 766.6,784.0 769.5,792.8 772.5,802.5 775.4,784.7 778.4,774.3 781.4,765.5 784.3,756.6 787.4,752.5 790.4,754.4 793.3,753.9 796.4,746.2 799.4,756.3 802.4,757.0"/>
<polyline stroke="#ee4d9b" points="825.1,828.3 828.0,826.9 831.3,828.3 834.5,816.5 837.6,813.6 840.9,811.0 844.0,803.5 847.2,799.5 850.4,799.8 853.6,804.4 856.7,808.1 860.0,803.6 863.1,799.2 866.3,799.6 869.4,799.1 872.7,795.1 875.9,786.5 879.1,784.7 882.3,787.4 885.4,780.3 888.5,773.3 891.8,776.9 894.9,775.8 898.1,773.3 901.4,768.1 904.5,767.0 907.8,773.3 910.9,767.0 914.1,763.6 917.4,757.3 920.5,756.2 923.7,759.3 927.0,758.1 930.1,751.4 933.3,753.2 936.6,749.6 939.7,748.2 943.0,746.7 946.2,751.9 949.3,752.9 952.6,754.4 955.7,750.4 958.9,755.9 962.0,761.3 965.3,756.6 968.4,755.1 971.7,745.8 974.9,749.2 978.2,753.3 981.4,757.0 984.5,753.3 987.8,752.6 991.1,755.9 994.2,758.1 997.5,764.7 1000.6,758.1 1003.7,750.2 1006.8,737.8 1010.0,741.1 1013.1,736.2 1016.4,741.1 1019.6,745.1 1022.8,730.7 1026.0,732.9 1029.1,720.4 1032.4,727.8 1035.5,724.8 1038.7,736.3 1042.0,730.3 1045.1,730.4 1048.3,730.7 1051.4,720.4 1054.7,722.6 1058.0,725.5 1061.1,729.2 1064.3,730.0 1067.4,732.9 1070.7,744.0 1073.8,737.7 1077.0,741.4 1080.1,734.4 1083.4,734.0 1086.5,731.4 1089.8,743.3 1093.0,738.8 1096.1,747.3 1099.4,752.2 1102.5,747.0 1105.7,743.0 1108.8,746.2 1112.1,749.9 1115.2,747.4 1118.5,745.5 1121.6,739.9 1124.8,744.0 1127.9,743.7 1131.2,745.2 1134.4,755.6 1137.5,751.7 1140.8,749.6"/>
</g>
<g stroke="#fff" stroke-width="1" fill="none" shape-rendering="crispEdges">
<path d="M54 720.5H60.5V829.5H54"/>
<path d="M54 775H60" stroke="#8e8e90" stroke-width="2"/>
<path d="M109 720.5H115.5V829.5H109"/>
<path d="M109 775H115" stroke="#8e8e90" stroke-width="2"/>
<path d="M170 720.5H176.5V829.5H170"/>
<path d="M170 775H176" stroke="#8e8e90" stroke-width="2"/>
<path d="M177.5 841V835.5H487.5V841"/>
<path d="M506.5 841V835.5H807.5V841"/>
<path d="M825.5 841V835.5H1145.5V841"/>
</g>
<rect x="177" y="830" width="310" height="4" fill="#00c000"/>
<rect x="506" y="830" width="300" height="4" fill="#00c000"/>
<rect x="825" y="830" width="309" height="4" fill="#00c000"/>
<g fill="#fff" font-size="10" text-anchor="end">
<text x="51" y="729.5">5.56</text>
<text x="51" y="778.5">2.91</text>
<text x="51" y="827">0.26</text>
<text x="106" y="729.5">7.36</text>
<text x="106" y="778.5">6.11</text>
<text x="106" y="827">4.85</text>
<text x="167" y="729.5">13.93</text>
<text x="167" y="778.5">10.81</text>
<text x="167" y="827">7.69</text>
</g>
<text transform="translate(21.5,775) rotate(-90)" fill="#fff" font-size="10" text-anchor="middle">Y2</text>
<text transform="translate(77,775) rotate(-90)" fill="#fff" font-size="10" text-anchor="middle">Y1</text>
<text transform="translate(131.5,775) rotate(-90)" fill="#fff" font-size="10" text-anchor="middle">Y</text>
<g fill="#fff" font-size="10">
<text x="177" y="851">2024-08-05 17:06:14.000</text><text x="487.5" y="851" text-anchor="end">2024-08-06 17:06:14.000</text>
<text x="506" y="851">2024-08-06 16:06:14.000</text><text x="806.5" y="851" text-anchor="end">2024-08-06 17:06:14.000</text>
<text x="825" y="851">2024-08-06 16:06:14.000</text><text x="1145" y="851" text-anchor="end">2024-08-06 17:06:14.000</text>
</g>
<g fill="#fff" font-size="11" font-weight="bold">
<text x="293" y="865">X—1 day 00:00:00</text><text x="627" y="865">X1— 01:00:00</text><text x="956" y="865">X2— 01:00:00</text>
</g>
<g transform="translate(277,853)"><rect x="5" y="5.600" width="9.500" height="6.900" rx="1" fill="#fff"/><path d="M1.100 6.600V3.700A2.700 2.700 0 0 1 6.500 3.700V6" fill="none" stroke="#fff" stroke-width="1.700"/></g>
<g transform="translate(611,853)"><rect x="5" y="5.600" width="9.500" height="6.900" rx="1" fill="#fff"/><path d="M1.100 6.600V3.700A2.700 2.700 0 0 1 6.500 3.700V6" fill="none" stroke="#fff" stroke-width="1.700"/></g>
<g transform="translate(940,853)"><rect x="5" y="5.600" width="9.500" height="6.900" rx="1" fill="#fff"/><path d="M1.100 6.600V3.700A2.700 2.700 0 0 1 6.500 3.700V6" fill="none" stroke="#fff" stroke-width="1.700"/></g>
<text x="575" y="708.5" fill="#fff" font-size="12" text-anchor="middle">Demo Process Data — Demo Data/Process Data</text>
</svg>
<div class="rz"></div></div>
<div class="p" style="left:1152px;top:1px;width:427px;height:232px">
<div class="a t" style="left:0;right:0;top:100px;line-height:30px;text-align:center;font-family:'Liberation Mono',monospace;font-weight:normal;-webkit-text-stroke:0.4px #858587;font-size:26px;color:#858587;transform:scaleY(0.86);transform-origin:50% 74%">Example Compilation</div>
<div class="rz"></div></div>
<div class="p" style="left:1581px;top:1px;width:291px;height:232px">
<div class="hd"><div class="t">Plotly: Gauge</div><div class="g" style="left:137px"></div></div>
<svg style="left:-1582px;top:-2px" width="1872" height="240" viewBox="0 0 1872 240">
<path d="M1621.70 201.40A104.7 104.7 0 0 1 1694.05 101.82L1702.23 127.03A78.2 78.2 0 0 0 1648.20 201.40Z" fill="#9fdf5f" stroke="#7a7a7a" stroke-width="0.6"/>
<path d="M1694.05 101.82A104.7 104.7 0 0 1 1811.10 139.86L1789.67 155.44A78.2 78.2 0 0 0 1702.23 127.03Z" fill="#ffa500" stroke="#7a7a7a" stroke-width="0.6"/>
<path d="M1811.10 139.86A104.7 104.7 0 0 1 1831.10 201.40L1804.60 201.40A78.2 78.2 0 0 0 1789.67 155.44Z" fill="#ff0000" stroke="#7a7a7a" stroke-width="0.6"/>
<path d="M1628.80 201.40A97.6 97.6 0 0 1 1687.08 112.07L1692.23 123.79A84.8 84.8 0 0 0 1641.60 201.40Z" fill="#008000"/>
<g stroke="#aaa" stroke-width="1"><path d="M1616 201.400H1621.700M1831.100 201.400H1836.500M1726.400 91V96.700"/></g>
<g fill="#dcdcdc" font-family="Liberation Serif,serif" font-size="13">
<text x="1614" y="205.300" text-anchor="end">0</text><text x="1839.500" y="205.300">10</text><text x="1727" y="85.200" text-anchor="middle">5</text></g>
<g fill="#dcdcdc" font-family="DejaVu Sans,sans-serif" text-anchor="middle">
<text x="1726.500" y="65" font-size="20.300">Simulated Pressure 2</text>
<text x="1726.500" y="192" font-size="43.500">3.68</text></g>
</svg>
<div class="rz"></div></div>
<div class="p" style="left:1152px;top:235px;width:291px;height:213px">
<div class="hd"><div class="t">IO Model</div><div class="g" style="left:137px"></div></div>
<div class="tb" style="top:34px"></div>
<div class="a" style="left:-1153px;top:-236px;width:0;height:0">
<svg style="left:1161.00px;top:279.00px" width="16" height="16" viewBox="0 0 16 16"><g fill="none" stroke="#c3c3c5" stroke-width="2.300"><path d="M2.100 6.800A6.100 6.100 0 0 1 12.900 4.200"/><path d="M13.900 9.200A6.100 6.100 0 0 1 3.100 11.800"/></g><path fill="#c3c3c5" d="M15.600 0.600V6.800H9.400Z"/><path fill="#c3c3c5" d="M0.400 15.400V9.200H6.600Z"/></svg>
<svg style="left:1193.00px;top:279.00px" width="16" height="16" viewBox="0 0 16 16"><g fill="none" stroke="#c3c3c5"><circle cx="6.500" cy="6.500" r="5.200" stroke-width="2.300"/><path d="M10.600 10.600L14.800 14.800" stroke-width="2.800" stroke-linecap="round"/></g></svg>
<svg style="left:1164px;top:316px" width="10" height="6"><path d="M0 0H10L5 5.500Z" fill="#fff"/></svg>
<svg style="left:1179.00px;top:310.00px" width="16" height="16" viewBox="0 0 16 16"><g fill="#fff"><circle cx="2.600" cy="8" r="2.300"/><circle cx="7.600" cy="2.400" r="2.300"/><circle cx="13.400" cy="2.600" r="2.300"/><circle cx="13.600" cy="8.600" r="2.300"/><circle cx="7.800" cy="13.600" r="2.300"/></g><g stroke="#fff" stroke-width="2.200" fill="none"><path d="M2.600 8L7.600 2.400M2.600 8L7.800 13.600M7.800 13.600L13.600 8.600M7.600 8.200L13.400 2.600M7.600 8.200L7.800 13.600"/></g><circle cx="7.600" cy="8.200" r="2.700" fill="#fff"/><circle cx="7.600" cy="8.200" r="1.400" fill="#202124"/></svg>
<div class="a t" style="top:310.0px;line-height:16px;font-size:12px;color:#fff;left:1200px;">System</div>
<div class="a" style="left:1168px;top:331px;width:1px;height:27px;background:#4a4a4e"></div>
<svg style="left:1186px;top:339px" width="6" height="10"><path d="M0 0V10L5.500 5Z" fill="#fff"/></svg>
<svg style="left:1199px;top:336px" width="16" height="16"><circle cx="8" cy="8" r="7.300" fill="none" stroke="#fff" stroke-width="1.100"/><circle cx="8" cy="8" r="3.100" fill="#fff"/></svg>
<div class="a t" style="top:336.0px;line-height:16px;font-size:12px;color:#fff;left:1220px;">Core</div>
</div>
<div class="rz"></div></div>
<div class="p" style="left:1445px;top:235px;width:213px;height:174px">
<div class="a" style="left:-1446px;top:-236px;width:0;height:0">
<div class="a t" style="top:244.5px;line-height:16px;font-size:12px;color:#fff;left:1456px;">Simulated Pressure</div>
<svg style="left:1461.50px;top:269.00px" width="12" height="12" viewBox="0 0 12 12"><path d="M0.5 11.400H12" stroke="#8a8a8c" stroke-width="1.100" fill="none"/><path d="M0.600 0V12" stroke="#8a8a8c" stroke-width="1.100" fill="none"/><path d="M7 0V6" stroke="#8a8a8c" stroke-width="1.800" fill="none"/><path d="M2.7 4.500L7 9.400L11.3 4.500Z" fill="#8a8a8c"/></svg>
<svg style="left:1478.35px;top:269.00px" width="12" height="12" viewBox="0 0 12 12"><path d="M0.5 0.600H12" stroke="#8a8a8c" stroke-width="1.100" fill="none"/><path d="M0.600 0V12" stroke="#8a8a8c" stroke-width="1.100" fill="none"/><path d="M7 12V5" stroke="#8a8a8c" stroke-width="1.800" fill="none"/><path d="M2.7 7.200L7 2.300L11.3 7.200Z" fill="#8a8a8c"/></svg>
<svg style="left:1495.20px;top:269.00px" width="12" height="12" viewBox="0 0 12 12"><path d="M0 11.400H12" stroke="#8a8a8c" stroke-width="1.100" fill="none"/><path d="M6 0V6" stroke="#8a8a8c" stroke-width="1.800" fill="none"/><path d="M1.7000000000000002 4.500L6 9.400L10.3 4.500Z" fill="#8a8a8c"/></svg>
<svg style="left:1512.05px;top:269.00px" width="12" height="12" viewBox="0 0 12 12"><path d="M0 0.600H12" stroke="#8a8a8c" stroke-width="1.100" fill="none"/><path d="M6 12V5" stroke="#8a8a8c" stroke-width="1.800" fill="none"/><path d="M1.7000000000000002 7.200L6 2.300L10.3 7.200Z" fill="#8a8a8c"/></svg>
<div class="a" style="left:1613px;top:265px;width:34px;height:21px;border-radius:3.500px;background:#008000"></div>
<div class="a t" style="top:267.5px;line-height:16px;font-size:10px;color:#fff;left:1430px;width:400px;text-align:center;">Good</div>
<svg style="left:1456px;top:286px" width="5" height="44"><path d="M4.500 0.700H1V43.300H4.500" fill="none" stroke="#a8a8aa" stroke-width="2"/></svg>
<div class="a t" style="top:284.0px;line-height:16px;font-size:10px;color:#fff;left:1465px;">8.00</div>
<div class="a t" style="top:295.0px;line-height:16px;font-size:10px;color:#fff;left:1465px;">6.00</div>
<div class="a t" style="top:306.0px;line-height:16px;font-size:10px;color:#fff;left:1465px;">2.00</div>
<div class="a t" style="top:317.0px;line-height:16px;font-size:10px;color:#fff;left:1465px;">0.00</div>
<div class="a t" style="right:calc(100% - 1647px);top:299px;line-height:34px;font-size:24px;color:#fff;">5.58<span style="font-size:12px;margin-left:5px">bar</span></div>
<div class="a t" style="top:332.5px;line-height:16px;font-size:10px;color:#fff;right:calc(100% - 1647px);">2024-08-06 17:12:59.650</div>
<svg style="left:1456px;top:346px" width="193" height="8"><rect x="1" y="1" width="3" height="6" fill="#0040a0"/><path d="M0.500 7V0.500H191.500V7M96.500 0.500V7" fill="none" stroke="#fff" stroke-width="1.200"/></svg>
<div class="a t" style="top:351.5px;line-height:16px;font-size:10px;color:#fff;left:1351.5px;width:400px;text-align:center;">s</div>
<div class="a t" style="top:351.5px;line-height:16px;font-size:10px;color:#fff;left:1447px;width:400px;text-align:center;">m</div>
</div>
<div class="rz"></div></div>
<div class="p" style="left:1659px;top:235px;width:213px;height:174px">
<div class="a" style="left:-1660px;top:-236px;width:0;height:0">
<div class="a t" style="top:244.5px;line-height:16px;font-size:12px;color:#fff;left:1670px;">Simulated Density</div>
<svg style="left:1675.50px;top:269.00px" width="12" height="12" viewBox="0 0 12 12"><path d="M0.5 11.400H12" stroke="#8a8a8c" stroke-width="1.100" fill="none"/><path d="M0.600 0V12" stroke="#8a8a8c" stroke-width="1.100" fill="none"/><path d="M7 0V6" stroke="#8a8a8c" stroke-width="1.800" fill="none"/><path d="M2.7 4.500L7 9.400L11.3 4.500Z" fill="#8a8a8c"/></svg>
<svg style="left:1692.35px;top:269.00px" width="12" height="12" viewBox="0 0 12 12"><path d="M0.5 0.600H12" stroke="#8a8a8c" stroke-width="1.100" fill="none"/><path d="M0.600 0V12" stroke="#8a8a8c" stroke-width="1.100" fill="none"/><path d="M7 12V5" stroke="#8a8a8c" stroke-width="1.800" fill="none"/><path d="M2.7 7.200L7 2.300L11.3 7.200Z" fill="#8a8a8c"/></svg>
<svg style="left:1709.20px;top:269.00px" width="12" height="12" viewBox="0 0 12 12"><path d="M0 11.400H12" stroke="#8a8a8c" stroke-width="1.100" fill="none"/><path d="M6 0V6" stroke="#8a8a8c" stroke-width="1.800" fill="none"/><path d="M1.7000000000000002 4.500L6 9.400L10.3 4.500Z" fill="#8a8a8c"/></svg>
<svg style="left:1726.05px;top:269.00px" width="12" height="12" viewBox="0 0 12 12"><path d="M0 0.600H12" stroke="#fff" stroke-width="1.100" fill="none"/><path d="M6 12V5" stroke="#fff" stroke-width="1.800" fill="none"/><path d="M1.7000000000000002 7.200L6 2.300L10.3 7.200Z" fill="#fff"/></svg>
<div class="a" style="left:1827px;top:265px;width:34px;height:21px;border-radius:3.500px;background:#008000"></div>
<div class="a t" style="top:267.5px;line-height:16px;font-size:10px;color:#fff;left:1644px;width:400px;text-align:center;">Good</div>
<svg style="left:1670px;top:286px" width="5" height="44"><path d="M4.500 0.700H1V43.300H4.500" fill="none" stroke="#a8a8aa" stroke-width="2"/></svg>
<div class="a t" style="top:284.0px;line-height:16px;font-size:10px;color:#fff;left:1679px;">20.00</div>
<div class="a t" style="top:295.0px;line-height:16px;font-size:10px;color:#fff;left:1679px;">10.00</div>
<div class="a t" style="top:306.0px;line-height:16px;font-size:10px;color:#fff;left:1679px;">1.00</div>
<div class="a t" style="top:317.0px;line-height:16px;font-size:10px;color:#fff;left:1679px;">0.00</div>
<div class="a t" style="right:calc(100% - 1861px);top:299px;line-height:34px;font-size:24px;color:#fff;">10.77<span style="font-size:12px;margin-left:5px">g/cm³</span></div>
<div class="a t" style="top:332.5px;line-height:16px;font-size:10px;color:#fff;right:calc(100% - 1861px);">2024-08-06 17:12:53.650</div>
<svg style="left:1670px;top:346px" width="193" height="8"><rect x="1" y="1" width="103" height="6" fill="#0040a0"/><path d="M0.500 7V0.500H191.500V7M96.500 0.500V7" fill="none" stroke="#fff" stroke-width="1.200"/></svg>
<div class="a t" style="top:351.5px;line-height:16px;font-size:10px;color:#fff;left:1565.5px;width:400px;text-align:center;">s</div>
<div class="a t" style="top:351.5px;line-height:16px;font-size:10px;color:#fff;left:1661px;width:400px;text-align:center;">m</div>
</div>
<div class="rz"></div></div>
<div class="p" style="left:1445px;top:411px;width:427px;height:466px">
<div class="hd"><div class="t">Demo Process Data</div><div class="g" style="left:205px"></div></div>
<div class="tb" style="top:34px"></div>
<div class="a" style="left:-1446px;top:-412px;width:0;height:0">
<svg style="left:1453.50px;top:455.00px" width="16" height="16" viewBox="0 0 16 16"><g fill="none" stroke="#c3c3c5" stroke-width="2.300"><path d="M2.100 6.800A6.100 6.100 0 0 1 12.900 4.200"/><path d="M13.900 9.200A6.100 6.100 0 0 1 3.100 11.800"/></g><path fill="#c3c3c5" d="M15.600 0.600V6.800H9.400Z"/><path fill="#c3c3c5" d="M0.400 15.400V9.200H6.600Z"/></svg>
<svg style="left:1485.50px;top:455.00px" width="16" height="16" viewBox="0 0 16 16"><path fill="#c3c3c5" stroke="#c3c3c5" stroke-linejoin="round" stroke-width="1" d="M0.600 0.600H15.400L9.800 7.400V15.400L6.200 12.600V7.400Z"/></svg>
<svg style="left:1518.00px;top:455.00px" width="16" height="16" viewBox="0 0 16 16"><g fill="none" stroke="#c3c3c5"><circle cx="6.500" cy="6.500" r="5.200" stroke-width="2.300"/><path d="M10.600 10.600L14.800 14.800" stroke-width="2.800" stroke-linecap="round"/></g></svg>
<svg style="left:1769.50px;top:457.00px" width="17" height="12" viewBox="0 0 17 12"><path fill-rule="evenodd" fill="#a8a8aa" d="M0 6Q4 0 8.500 0Q13 0 17 6Q13 12 8.500 12Q4 12 0 6ZM8.500 1.800A4.200 4.200 0 1 0 8.500 10.200A4.200 4.200 0 1 0 8.500 1.800Z"/><circle cx="8.500" cy="6" r="2.600" fill="#a8a8aa"/></svg>
<div class="a t" style="top:455.0px;line-height:16px;font-size:12px;color:#a8a8aa;font-weight:bold;left:1791.5px;">10</div>
<svg style="left:1812.50px;top:456.00px" width="14" height="14" viewBox="0 0 14 14"><rect x="0" y="0" width="14" height="14" rx="1.600" fill="#d0d0d2"/><path d="M2.800 7.300L5.800 10.200L11.300 4.300" stroke="#2d2e32" stroke-width="2" fill="none"/></svg>
<div class="a t" style="top:455.0px;line-height:16px;font-size:12px;color:#a8a8aa;font-weight:bold;left:1832.5px;">0 / 10</div>
<div class="a" style="left:1446px;top:481px;width:426px;height:31px;background:#2d2e32"></div>
<div class="ln" style="left:1446px;top:512px;width:426px;background:#57575b"></div>
<div class="a t" style="top:488.0px;line-height:16px;font-size:18px;color:#fff;font-weight:bold;left:1451px;line-height:20px;margin-top:-2px;">Name</div>
<div class="a t" style="top:488.0px;line-height:16px;font-size:18px;color:#fff;font-weight:bold;left:1529px;line-height:20px;margin-top:-2px;">Value</div>
<div class="a t" style="top:488.0px;line-height:16px;font-size:18px;color:#fff;font-weight:bold;left:1605px;line-height:20px;margin-top:-2px;">Quality</div>
<div class="a t" style="top:488.0px;line-height:16px;font-size:18px;color:#fff;font-weight:bold;left:1696px;line-height:20px;margin-top:-2px;">Timestamp</div>
<svg style="left:1506.00px;top:490.50px" width="10" height="13" viewBox="0 0 10 13"><g fill="none" stroke="#c8c8ca" stroke-width="1"><path d="M0.800 5.500L5 0.800L9.200 5.500Z"/><path d="M0.800 7.500L5 12.200L9.200 7.500Z"/></g></svg>
<svg style="left:1582.00px;top:490.50px" width="10" height="13" viewBox="0 0 10 13"><g fill="none" stroke="#c8c8ca" stroke-width="1"><path d="M0.800 5.500L5 0.800L9.200 5.500Z"/><path d="M0.800 7.500L5 12.200L9.200 7.500Z"/></g></svg>
<svg style="left:1671.50px;top:490.50px" width="10" height="13" viewBox="0 0 10 13"><g fill="none" stroke="#c8c8ca" stroke-width="1"><path d="M0.800 5.500L5 0.800L9.200 5.500Z"/><path d="M0.800 7.500L5 12.200L9.200 7.500Z"/></g></svg>
<svg style="left:1852.50px;top:490.50px" width="10" height="13" viewBox="0 0 10 13"><g fill="none" stroke="#c8c8ca" stroke-width="1"><path d="M0.800 5.500L5 0.800L9.200 5.500Z"/><path d="M0.800 7.500L5 12.200L9.200 7.500Z"/></g></svg>
<div class="a" style="left:1446px;top:513px;width:426px;height:46px;background:#2d2e32;overflow:hidden">
<div class="a t" style="left:5px;top:13px;line-height:20px;font-size:18px">FC666</div>
<div class="a t" style="left:83px;top:13px;line-height:20px;font-size:18px">50.93</div>
<div class="a t" style="left:159px;top:13px;line-height:20px;font-size:18px">Good</div>
<div class="a t" style="left:249px;top:2px;line-height:21px;font-size:18px">2024-08-06<br>17:12:51.650</div>
</div>
<div class="a" style="left:1446px;top:559px;width:426px;height:46px;background:#232428;overflow:hidden">
<div class="a t" style="left:5px;top:13px;line-height:20px;font-size:18px">FC4711</div>
<div class="a t" style="left:83px;top:13px;line-height:20px;font-size:18px">34.22</div>
<div class="a t" style="left:159px;top:13px;line-height:20px;font-size:18px">Good</div>
<div class="a t" style="left:249px;top:2px;line-height:21px;font-size:18px">2024-08-06<br>17:12:51.650</div>
</div>
<div class="a" style="left:1446px;top:605px;width:426px;height:46px;background:#2d2e32;overflow:hidden">
<div class="a t" style="left:5px;top:13px;line-height:20px;font-size:18px">DC666</div>
<div class="a t" style="left:83px;top:13px;line-height:20px;font-size:18px">2.80</div>
<div class="a t" style="left:159px;top:13px;line-height:20px;font-size:18px">Good</div>
<div class="a t" style="left:249px;top:2px;line-height:21px;font-size:18px">2024-08-06<br>17:12:23.650</div>
</div>
<div class="a" style="left:1446px;top:651px;width:426px;height:46px;background:#232428;overflow:hidden">
<div class="a t" style="left:5px;top:13px;line-height:20px;font-size:18px">PC666</div>
<div class="a t" style="left:83px;top:13px;line-height:20px;font-size:18px">3.78</div>
<div class="a t" style="left:159px;top:13px;line-height:20px;font-size:18px">Good</div>
<div class="a t" style="left:249px;top:2px;line-height:21px;font-size:18px">2024-08-06<br>17:12:51.650</div>
</div>
<div class="a" style="left:1446px;top:697px;width:426px;height:46px;background:#2d2e32;overflow:hidden">
<div class="a t" style="left:5px;top:13px;line-height:20px;font-size:18px">DC4711</div>
<div class="a t" style="left:83px;top:13px;line-height:20px;font-size:18px">10.88</div>
<div class="a t" style="left:159px;top:13px;line-height:20px;font-size:18px">Good</div>
<div class="a t" style="left:249px;top:2px;line-height:21px;font-size:18px">2024-08-06<br>17:12:23.650</div>
</div>
<div class="a" style="left:1446px;top:743px;width:426px;height:46px;background:#232428;overflow:hidden">
<div class="a t" style="left:5px;top:13px;line-height:20px;font-size:18px">QC4711</div>
<div class="a t" style="left:83px;top:13px;line-height:20px;font-size:18px">23.84</div>
<div class="a t" style="left:159px;top:13px;line-height:20px;font-size:18px">Good</div>
<div class="a t" style="left:249px;top:2px;line-height:21px;font-size:18px">2024-08-06<br>17:12:43.650</div>
</div>
<div class="a" style="left:1446px;top:789px;width:426px;height:46px;background:#2d2e32;overflow:hidden">
<div class="a t" style="left:5px;top:13px;line-height:20px;font-size:18px">TC4711</div>
<div class="a t" style="left:83px;top:13px;line-height:20px;font-size:18px">118.26</div>
<div class="a t" style="left:159px;top:13px;line-height:20px;font-size:18px">Good</div>
<div class="a t" style="left:249px;top:2px;line-height:21px;font-size:18px">2024-08-06<br>17:12:50.650</div>
</div>
<div class="a" style="left:1446px;top:835px;width:426px;height:6px;background:#232428;overflow:hidden">
<div class="a t" style="left:5px;top:13px;line-height:20px;font-size:18px">TC666</div>
<div class="a t" style="left:83px;top:13px;line-height:20px;font-size:18px">65.10</div>
<div class="a t" style="left:159px;top:13px;line-height:20px;font-size:18px">Good</div>
<div class="a t" style="left:249px;top:2px;line-height:21px;font-size:18px">2024-08-06<br>17:12:50.650</div>
</div>
<div class="a" style="left:1446px;top:841px;width:426px;height:35px;background:#2d2e32;border-top:1px solid #57575b"></div>
<svg style="left:1455px;top:853px" width="14" height="12"><path d="M6.500 1L1.500 6L6.500 11M12.500 1L7.500 6L12.500 11" fill="none" stroke="#6a6a6c" stroke-width="2.100"/></svg>
<svg style="left:1490px;top:853px" width="8" height="12"><path d="M6.500 1L1.500 6L6.500 11" fill="none" stroke="#6a6a6c" stroke-width="2.100"/></svg>
<div class="a t" style="top:851.0px;line-height:16px;font-size:11px;color:#9a9a9c;font-weight:bold;left:1519px;">1/1</div>
<svg style="left:1554px;top:853px" width="8" height="12"><path d="M1.500 1L6.500 6L1.500 11" fill="none" stroke="#6a6a6c" stroke-width="2.100"/></svg>
<svg style="left:1584px;top:853px" width="14" height="12"><path d="M1.500 1L6.500 6L1.500 11M7.500 1L12.500 6L7.500 11" fill="none" stroke="#6a6a6c" stroke-width="2.100"/></svg>
<div class="a t" style="top:851.0px;line-height:16px;font-size:11px;color:#9a9a9c;font-weight:bold;left:1615px;">Go to page:</div>
<div class="a t" style="top:851.0px;line-height:16px;font-size:11px;color:#9a9a9c;font-weight:bold;left:1693px;">1</div>
<div class="a t" style="top:851.0px;line-height:16px;font-size:11px;color:#9a9a9c;font-weight:bold;left:1724px;">Show:</div>
<div class="a t" style="top:851.0px;line-height:16px;font-size:11px;color:#9a9a9c;font-weight:bold;left:1776px;">10</div>
<svg style="left:1796px;top:857px" width="8" height="5"><path d="M0 0H8L4 4.500Z" fill="#c8c8ca"/></svg>
</div>
<div class="rz"></div></div>
<div class="p" style="left:1152px;top:450px;width:291px;height:213px">
<div class="hd"><div class="t">Add Cursors</div><div class="g" style="left:137px"></div></div>
<div class="big" style="top:95px">Click Here to Add Chart<br>Cursors</div>
<div class="rz"></div></div>
<div class="p" style="left:1152px;top:664px;width:291px;height:213px">
<div class="hd"><div class="t">Clear Chart</div><div class="g" style="left:137px"></div></div>
<div class="big" style="top:109px">Click Here to Clear Chart</div>
<div class="rz"></div></div></body></html>
